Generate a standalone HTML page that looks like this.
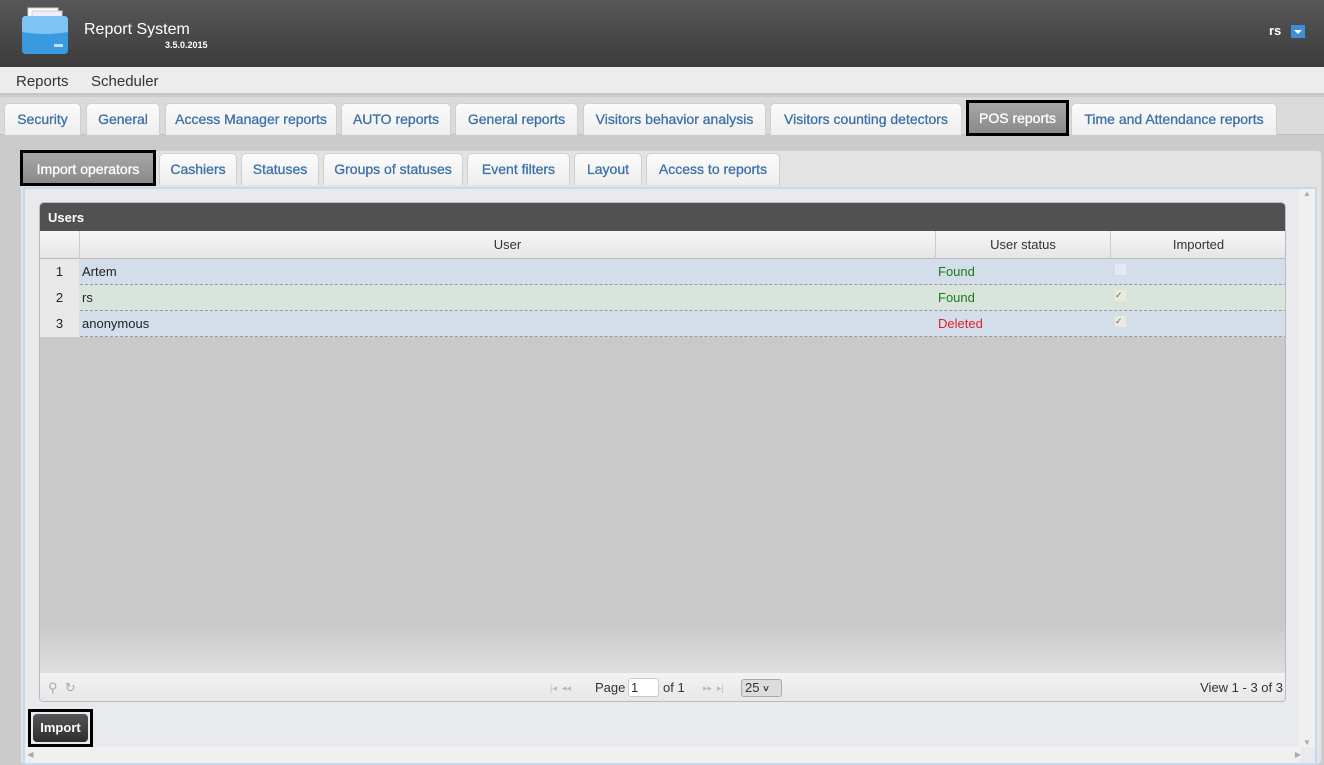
<!DOCTYPE html>
<html><head><meta charset="utf-8"><style>
*{box-sizing:border-box;margin:0;padding:0}
body{width:1324px;height:765px;overflow:hidden;background:#cbcbcb;font-family:"Liberation Sans",sans-serif;font-size:14px;position:relative}
.abs{position:absolute}
.hdr{left:0;top:0;width:1324px;height:67px;background:linear-gradient(#575757,#3c3c3c)}
.menu{left:0;top:67px;width:1324px;height:28px;background:#ececec;border-bottom:2px solid #c4c4c4;color:#333;font-size:15px}
.tabs{left:0;top:97px;width:1324px;height:38px;background:#dadada;border-bottom:1px solid #c0c0c0}
.tab{position:absolute;top:6px;height:32px;background:linear-gradient(#fbfbfb,#eeeeee);border:1px solid #cfcfcf;border-bottom:none;border-radius:5px 5px 0 0;color:#3c70a8;font-size:14px;text-align:center;line-height:30px;-webkit-text-stroke:0.3px #3c70a8}
.sel{background:linear-gradient(#a8a8a8,#8a8a8a);color:#fff;-webkit-text-stroke:0.3px #fff;border:3px solid #000;border-radius:0;line-height:26px}
.panel{left:20px;top:150px;width:1302px;height:615px;background:#e3e3e3;border:1px solid #cfcfcf;border-radius:5px}
.content{left:23px;top:187px;width:1294px;height:578px;background:#e9eaee;border:2px solid #c5d9ef}
.grid{left:39px;top:202px;width:1247px;height:500px;background:#c9c9c9;border:1px solid #bbb;border-radius:5px 5px 4px 4px;overflow:hidden}
.cell{position:absolute;height:26px;line-height:26px;font-size:13px;color:#222;padding-left:3px}
</style></head><body>
<div class="abs hdr">
 <svg class="abs" style="left:20px;top:6px" width="50" height="50" viewBox="0 0 50 50">
  <rect x="8" y="2" width="30" height="12" fill="#fff" stroke="#ccc"/>
  <rect x="12" y="5" width="30" height="10" fill="#eef" stroke="#ccc"/>
  <path d="M2 14 Q2 10 6 10 H44 Q48 10 48 14 V44 Q48 48 44 48 H6 Q2 48 2 44Z" fill="#3a9ae0"/>
  <path d="M2 14 Q2 10 6 10 H44 Q48 10 48 14 V26 Q25 30 2 26Z" fill="#7cc4f2"/>
  <rect x="34" y="38" width="9" height="3" fill="#bfe0f8"/>
 </svg>
 <div class="abs" style="left:84px;top:21px;color:#fff;font-size:16px">Report System</div>
 <div class="abs" style="left:165px;top:40px;color:#fff;font-size:9px;font-weight:bold">3.5.0.2015</div>
 <div class="abs" style="left:1269px;top:23px;color:#fff;font-size:13px;font-weight:bold">rs</div>
 <div class="abs" style="left:1291px;top:25px;width:14px;height:13px;background:#3c8fd8"><div style="margin:5px auto 0;width:0;height:0;border-left:4px solid transparent;border-right:4px solid transparent;border-top:4px solid #fff"></div></div>
</div>
<div class="abs menu"><span class="abs" style="left:16px;top:6px">Reports</span><span class="abs" style="left:91px;top:6px">Scheduler</span></div>
<div class="abs tabs">
 <div class="tab" style="left:4px;width:77px">Security</div>
 <div class="tab" style="left:86px;width:74px">General</div>
 <div class="tab" style="left:165px;width:172px">Access Manager reports</div>
 <div class="tab" style="left:341px;width:110px">AUTO reports</div>
 <div class="tab" style="left:455px;width:123px">General reports</div>
 <div class="tab" style="left:583px;width:183px">Visitors behavior analysis</div>
 <div class="tab" style="left:770px;width:192px">Visitors counting detectors</div>
 <div class="tab sel" style="left:966px;top:3px;width:103px;height:36px;line-height:30px">POS reports</div>
 <div class="tab" style="left:1071px;width:206px">Time and Attendance reports</div>
</div>
<div class="abs panel"></div>
<div class="abs" style="left:20px;top:150px;width:1302px;height:38px">
 <div class="tab sel" style="left:0;top:0;width:136px;height:36px;line-height:32px">Import operators</div>
 <div class="tab" style="left:139px;top:3px;width:78px">Cashiers</div>
 <div class="tab" style="left:221px;top:3px;width:78px">Statuses</div>
 <div class="tab" style="left:303px;top:3px;width:140px">Groups of statuses</div>
 <div class="tab" style="left:447px;top:3px;width:103px">Event filters</div>
 <div class="tab" style="left:554px;top:3px;width:68px">Layout</div>
 <div class="tab" style="left:626px;top:3px;width:134px">Access to reports</div>
</div>
<div class="abs content">
 <div class="abs" style="right:0;top:0;width:16px;height:558px;background:#f0f0f0;color:#aaa;font-size:8px;text-align:center">▲<div style="position:absolute;bottom:0;width:16px">▼</div></div>
 <div class="abs" style="left:0;bottom:0;width:1276px;height:16px;background:#f0f0f0;color:#aaa;font-size:8px;line-height:16px">&nbsp;◀<span style="position:absolute;right:0">▶</span></div>
</div>
<div class="abs grid">
 <div class="abs" style="left:0;top:0;width:1247px;height:28px;background:#515151;color:#fff;font-weight:bold;font-size:13px;line-height:30px;padding-left:8px">Users</div>
 <div class="abs" style="left:0;top:28px;width:1247px;height:28px;background:linear-gradient(#f6f6f6,#e6e6e6);border-bottom:1px solid #bbb;font-size:13px;color:#333;line-height:28px">
  <div class="abs" style="left:39px;width:856px;height:28px;text-align:center;border-left:1px solid #ccc">User</div>
  <div class="abs" style="left:895px;width:175px;height:28px;text-align:center;border-left:1px solid #ccc">User status</div>
  <div class="abs" style="left:1070px;width:176px;height:28px;text-align:center;border-left:1px solid #ccc">Imported</div>
 </div>
 <div class="abs" style="left:0;top:56px;width:1247px">
  <div style="position:relative;height:26px;background:#d3deea;border-bottom:1px dashed #999">
   <div class="cell" style="left:0;width:39px;background:#e8e8e8;text-align:center;padding:0">1</div><div class="cell" style="left:39px">Artem</div><div class="cell" style="left:895px;color:#1b7a1b">Found</div>
   <div class="abs" style="left:1075px;top:5px;width:11px;height:11px;background:#e6eaf0"></div></div>
  <div style="position:relative;height:26px;background:#d9e5dc;border-bottom:1px dashed #999">
   <div class="cell" style="left:0;width:39px;background:#e8e8e8;text-align:center;padding:0">2</div><div class="cell" style="left:39px">rs</div><div class="cell" style="left:895px;color:#1b7a1b">Found</div>
   <div class="abs" style="left:1075px;top:5px;width:11px;height:11px;background:#eceadc;font-size:9px;line-height:11px;color:#666">✓</div></div>
  <div style="position:relative;height:26px;background:#d3deea;border-bottom:1px dashed #999">
   <div class="cell" style="left:0;width:39px;background:#e8e8e8;text-align:center;padding:0">3</div><div class="cell" style="left:39px">anonymous</div><div class="cell" style="left:895px;color:#e0202a">Deleted</div>
   <div class="abs" style="left:1075px;top:5px;width:11px;height:11px;background:#eceadc;font-size:9px;line-height:11px;color:#666">✓</div></div>
 </div>
 <div class="abs" style="left:0;top:420px;width:1247px;height:50px;background:linear-gradient(#c9c9c9,#dedede)"></div>
 <div class="abs" style="left:0;top:470px;width:1247px;height:30px;background:linear-gradient(#f3f3f3,#e6e6e6);font-size:13px;color:#333;line-height:30px">
  <span class="abs" style="left:8px;color:#aaa">⚲ &nbsp;↻</span>
  <span class="abs" style="left:510px;color:#bbb;font-size:9px">|◂ &nbsp;◂◂</span>
  <span class="abs" style="left:555px">Page</span>
  <span class="abs" style="left:588px;top:5px;width:31px;height:19px;background:#fff;border:1px solid #ccc;border-radius:3px;line-height:17px;padding-left:2px">1</span>
  <span class="abs" style="left:623px">of 1</span>
  <span class="abs" style="left:663px;color:#bbb;font-size:9px">▸▸ &nbsp;▸|</span>
  <span class="abs" style="left:701px;top:6px;width:41px;height:18px;background:#ddd;border:1px solid #aaa;border-radius:3px;line-height:16px;padding-left:3px">25 <b style="font-size:10px">˅</b></span>
  <span class="abs" style="right:4px">View 1 - 3 of 3</span>
 </div>
</div>
<div class="abs" style="left:28px;top:709px;width:65px;height:38px;border:3px solid #000;padding:2px"><div style="width:100%;height:100%;background:linear-gradient(#555,#2d2d2d);border-radius:4px;color:#fff;font-weight:bold;font-size:13px;text-align:center;line-height:28px">Import</div></div>
</body></html>
